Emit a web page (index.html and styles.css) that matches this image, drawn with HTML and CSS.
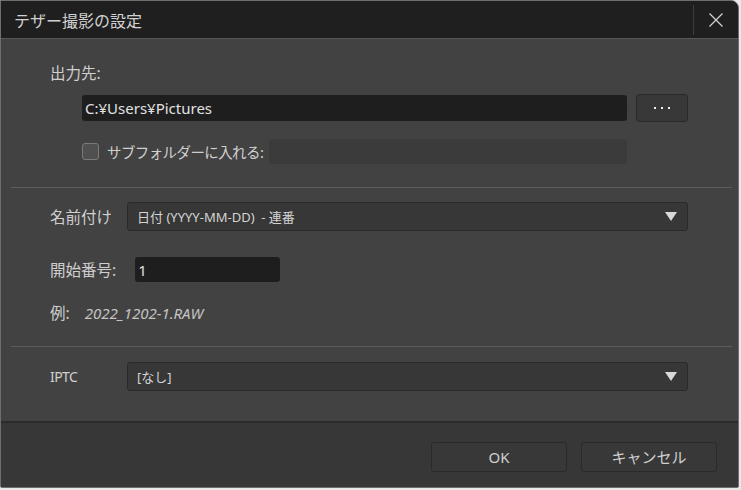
FILE: index.html
```html
<!DOCTYPE html>
<html lang="ja">
<head>
    <meta charset="UTF-8">
    <title>テザー撮影の設定</title>
    <link rel="stylesheet" href="styles.css">
</head>
<body>
    <div class="dialog">
        <div class="titlebar">
            <div class="title">テザー撮影の設定</div>
            <div class="close">
                <svg width="16" height="16" viewBox="0 0 16 16"><path d="M1.5 1.5 L14.5 14.5 M14.5 1.5 L1.5 14.5" stroke="#d0d0d0" stroke-width="1.3" fill="none"/></svg>
            </div>
        </div><!-- titlebar -->

        <div class="content">
            <div class="section first">
                <div class="label">出力先:</div>
                <div class="row path-row">
                    <div class="field path">C:¥Users¥Pictures</div>
                    <div class="btn browse"><i></i><i></i><i></i></div>
                </div>
                <div class="row sub-row">
                    <span class="checkbox"></span>
                    <span class="label sub-label">サブフォルダーに入れる:</span>
                    <div class="field disabled"></div>
                </div>
            </div><!-- section -->

            <div class="sep"></div>

            <div class="section middle">
                <div class="row">
                    <span class="label name-label">名前付け</span>
                    <div class="select"><span>日付 (YYYY-MM-DD)&nbsp; - 連番</span><span class="arrow"></span></div>
                </div>
                <div class="row start-row">
                    <span class="label">開始番号:</span>
                    <div class="field start">1</div>
                </div>
                <div class="row example-row">
                    <span class="label">例:</span>
                    <span class="example">2022_1202-1.RAW</span>
                </div>
            </div><!-- section -->

            <div class="sep"></div>

            <div class="section last">
                <div class="row">
                    <span class="label iptc-label">IPTC</span>
                    <div class="select"><span>[なし]</span><span class="arrow"></span></div>
                </div>
            </div><!-- section -->
        </div><!-- content -->

        <div class="footer">
            <div class="btn action">OK</div>
            <div class="btn action">キャンセル</div>
        </div><!-- footer -->
    </div>
</body>
</html>
```

FILE: styles.css
```css
body {
    margin: 0;
    background: #e8e8e8;
    font-family: "Noto Sans", "Noto Sans CJK JP", sans-serif;
    color: #cfcfcf;
}
.dialog {
    width: 737px;
    height: 486px;
    border: 1px solid #6e6e6e;
    border-radius: 0 8px 2px 2px;
    overflow: hidden;
    display: flex;
    flex-direction: column;
    background: #424242;
}
.titlebar {
    height: 37px;
    flex: none;
    display: flex;
    align-items: center;
    justify-content: space-between;
    background: #1f1f1f;
    border-bottom: 1px solid #585858;
}
.title {
    padding-left: 13px;
    font-size: 16px;
    color: #d2d2d2;
}
.close {
    width: 44px;
    height: 30px;
    border-left: 1px solid #3c3c3c;
    display: flex;
    align-items: center;
    justify-content: center;
}
.content {
    flex: 1;
    display: flex;
    flex-direction: column;
}
.section {
    padding-left: 49px;
    padding-right: 50px;
    display: flex;
    flex-direction: column;
}
.section.first {
    padding-top: 24px;
    padding-bottom: 23px;
}
.section.middle {
    padding-top: 14px;
    padding-bottom: 23px;
}
.section.last {
    padding-top: 15px;
}
.label {
    font-size: 15.5px;
    line-height: 20px;
    color: #cfcfcf;
}
.row {
    display: flex;
    align-items: center;
}
.path-row {
    margin-top: 11px;
    padding-left: 32px;
}
.field {
    height: 26px;
    box-sizing: border-box;
    background: #1e1e1e;
    border-radius: 3px;
    font-size: 15px;
    line-height: 26px;
    padding-left: 3px;
    color: #e2e2e2;
}
.path {
    flex: 1;
}
.btn {
    box-sizing: border-box;
    background: #383838;
    border: 1px solid #2a2a2a;
    border-radius: 3px;
    display: flex;
    align-items: center;
    justify-content: center;
    color: #d0d0d0;
}
.browse {
    width: 52px;
    height: 28px;
    margin-left: 9px;
    gap: 5px;
}
.browse i {
    width: 2px;
    height: 2px;
    background: #f0f0f0;
}
.sub-row {
    margin-top: 17px;
    padding-left: 32px;
    padding-right: 61px;
}
.checkbox {
    width: 17px;
    height: 17px;
    box-sizing: border-box;
    border: 1px solid #7a7a7a;
    border-radius: 3px;
    background: #505050;
    margin-right: 8px;
}
.sub-label {
    font-size: 14.5px;
    letter-spacing: -0.6px;
}
.disabled {
    flex: 1;
    height: 25px;
    margin-left: 6px;
    background: #3b3b3b;
}
.sep {
    height: 1px;
    background: #5c5c5c;
    margin: 0 6px 0 10px;
}
.name-label {
    width: 77px;
}
.iptc-label {
    width: 77px;
    font-size: 14px;
    letter-spacing: -0.6px;
}
.select {
    flex: 1;
    height: 29px;
    box-sizing: border-box;
    background: #373737;
    border: 1px solid #2a2a2a;
    border-radius: 3px;
    display: flex;
    align-items: center;
    justify-content: space-between;
    padding: 0 10px 0 9px;
    font-size: 13px;
    color: #d4d4d4;
}
.arrow {
    width: 0;
    height: 0;
    border-left: 6px solid transparent;
    border-right: 6px solid transparent;
    border-top: 9px solid #d8d8d8;
}
.start-row {
    margin-top: 26px;
}
.start {
    width: 145px;
    margin-left: 19px;
    height: 25px;
}
.example-row {
    margin-top: 21px;
}
.example {
    margin-left: 15px;
    font-size: 15px;
    font-style: italic;
    color: #c4c4c4;
}
.footer {
    height: 61px;
    flex: none;
    background: #373737;
    border-top: 2px solid #2b2b2b;
    display: flex;
    justify-content: flex-end;
    align-items: center;
    gap: 14px;
    padding-right: 21px;
    padding-top: 3px;
}
.action {
    width: 136px;
    height: 30px;
    font-size: 15px;
}
```
